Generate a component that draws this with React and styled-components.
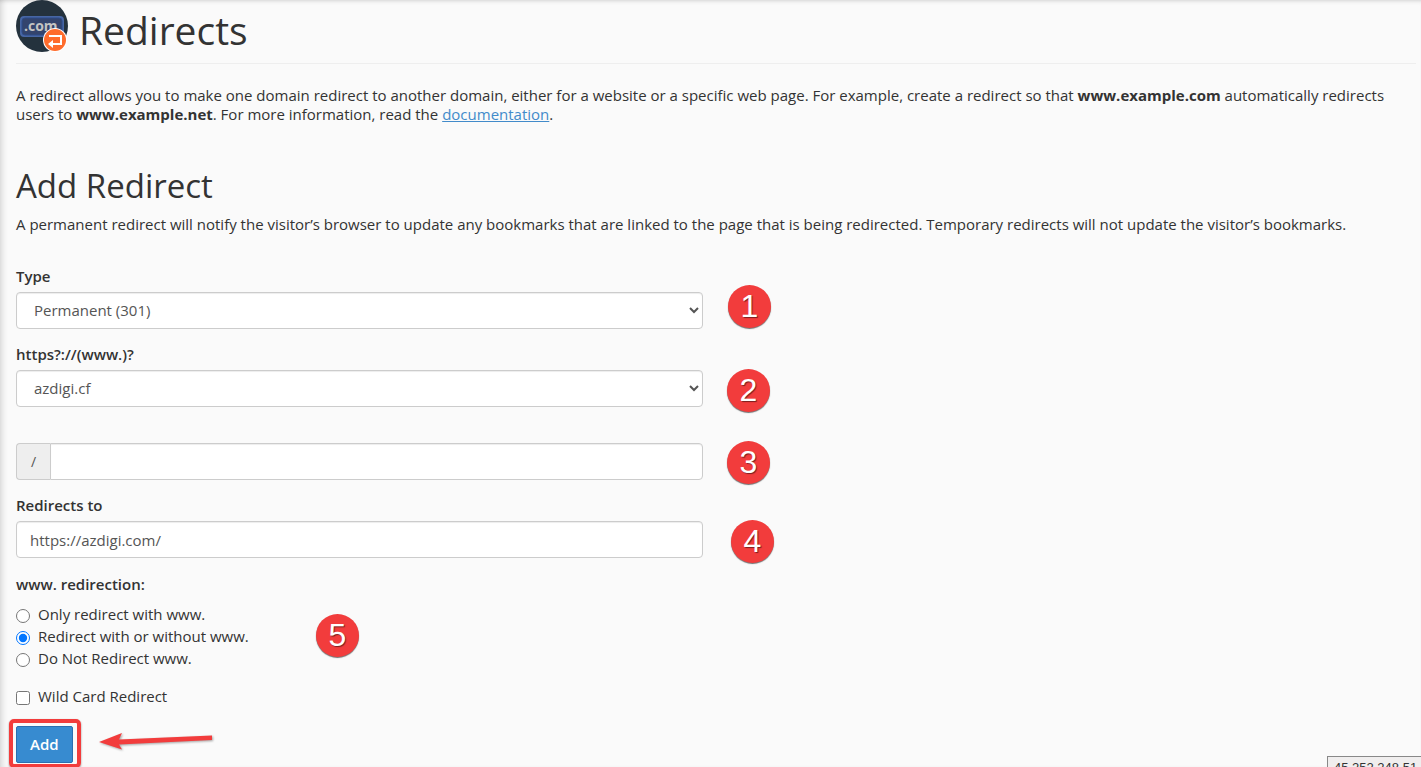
import React from "react";
import styled, { createGlobalStyle } from "styled-components";

const GlobalStyle = createGlobalStyle`
  *, *::before, *::after { box-sizing: border-box; }
  body {
    margin: 0;
    background: #fafafa;
    color: #333;
    font-family: "Open Sans", sans-serif;
    font-size: 15px;
    line-height: 19px;
    overflow: hidden;
  }
`;

const Page = styled.main`
  min-height: 100vh;
  padding: 0 5px 4px 16px;
  box-shadow: inset 6px 0 6px -4px rgba(0, 0, 0, 0.15), inset 0 4px 4px -3px rgba(0, 0, 0, 0.15);
`;

const PageHeader = styled.header`
  display: flex;
  align-items: flex-start;
  gap: 10px;
  height: 64px;
  border-bottom: 1px solid #eee;
`;

const Title = styled.h1`
  margin: 3px 0 0;
  font-size: 39px;
  line-height: 54px;
  font-weight: 400;
`;

const Intro = styled.p`
  margin: 22px 0 0;
`;

const SectionTitle = styled.h2`
  margin: 40px 0 0;
  font-size: 33px;
  line-height: 44px;
  font-weight: 400;
`;

const Description = styled.p`
  margin: 7px 0 0;
`;

const DocLink = styled.a`
  color: #428bca;
  text-decoration: underline;
`;

const Form = styled.form`
  width: calc(50% - 13px);
  margin-top: 33px;
`;

const Field = styled.div`
  display: flex;
  flex-direction: column;
  gap: 6px;
  margin-bottom: ${(p) => (p.$wide ? 36 : 16)}px;
`;

const Label = styled.label`
  font-weight: 600;
`;

const ControlRow = styled.div`
  position: relative;
  display: flex;
`;

const controlStyle = `
  flex: 1;
  min-width: 0;
  height: 37px;
  border: 1px solid #ccc;
  border-radius: 4px;
  background: #fff;
  color: #555;
  font: inherit;
  box-shadow: inset 0 1px 1px rgba(0, 0, 0, 0.075);
`;

const Select = styled.select`
  ${controlStyle}
  padding: 5px 5px 7px 13px;
`;

const Input = styled.input`
  ${controlStyle}
  padding: 6px 13px;
  ${(p) => p.$joined && "border-radius: 0 4px 4px 0;"}
`;

const Addon = styled.label`
  display: flex;
  align-items: center;
  justify-content: center;
  width: 34px;
  border: 1px solid #ccc;
  border-right: 0;
  border-radius: 4px 0 0 4px;
  background: #eee;
  color: #555;
  font-size: 14px;
`;

const Choices = styled.fieldset`
  position: relative;
  min-width: 0;
  margin: 0 0 16px;
  padding: 0;
  border: 0;
`;

const Legend = styled.legend`
  padding: 1px 0 0;
  margin-bottom: 9px;
  font-weight: 600;
`;

const Choice = styled.label`
  display: flex;
  align-items: center;
  gap: 8px;
  width: fit-content;
  height: 22px;

  input {
    width: 14px;
    height: 14px;
    margin: 3px 0 0;
  }
`;

const Actions = styled.div`
  position: relative;
  display: flex;
  width: fit-content;
  margin-top: 19px;
`;

const AddButton = styled.button`
  height: 37px;
  padding: 0 13px;
  border: 1px solid #2a6fb0;
  border-radius: 2px;
  background: #378bd0;
  color: #fff;
  font: inherit;
  font-weight: 600;
`;

const Highlight = styled.span`
  position: absolute;
  inset: -7px -8px -5px -7px;
  border: 4px solid #f23c3c;
  border-radius: 5px;
  box-shadow: 0 1px 2px rgba(0, 0, 0, 0.45);
  pointer-events: none;
`;

const Arrow = styled.svg`
  position: absolute;
  left: 82px;
  top: 4px;
  filter: drop-shadow(1px 1px 1px rgba(0, 0, 0, 0.35));
`;

const Badge = styled.span`
  position: absolute;
  left: ${(p) => p.$left};
  top: ${(p) => p.$top}px;
  display: flex;
  align-items: center;
  justify-content: center;
  width: 43px;
  height: 43px;
  border-radius: 50%;
  background: #f23c3c;
  box-shadow: 0 1px 1px rgba(0, 0, 0, 0.55);
  color: #fff;
  font: 400 32px/43px "Liberation Sans", sans-serif;
  text-shadow: 1px 1px 1px rgba(0, 0, 0, 0.5);
  pointer-events: none;
`;

const StatusTip = styled.div`
  position: fixed;
  right: -1px;
  bottom: -12px;
  width: 95px;
  height: 23px;
  padding: 2px 0 0 6px;
  border: 1px solid #888;
  background: #f0eeee;
  color: #333;
  font: 13px/18px "Liberation Sans", sans-serif;
  white-space: nowrap;
`;

function RedirectIcon() {
  return (
    <svg width="53" height="53" viewBox="0 0 53 53" aria-hidden="true">
      <circle cx="26" cy="26" r="26" fill="#24323d" />
      <rect x="4" y="16" width="44" height="21" rx="4" fill="#4766a4" />
      <rect x="6" y="18" width="40" height="17" rx="3" fill="#33446d" stroke="#2d4b88" />
      <text x="8" y="31" fill="#c3c3c3" fontFamily="Open Sans" fontWeight="700" fontSize="14">.com</text>
      <circle cx="39" cy="40" r="12" fill="#fff" />
      <circle cx="39" cy="40" r="11" fill="#ff6c2c" />
      <path d="M33 36H45V44H36" fill="none" stroke="#fff" strokeWidth="2" />
      <path d="M32 44L37 40V48Z" fill="#fff" />
    </svg>
  );
}

const redirections = [
  "Only redirect with www.",
  "Redirect with or without www.",
  "Do Not Redirect www.",
];

export default function App() {
  return (
    <>
      <GlobalStyle />
      <Page>
        <PageHeader>
          <RedirectIcon />
          <Title>Redirects</Title>
        </PageHeader>
        <Intro>
          A redirect allows you to make one domain redirect to another domain, either for a website or a
          specific web page. For example, create a redirect so that <b>www.example.com</b> automatically
          redirects users to <b>www.example.net</b>. For more information, read the{" "}
          <DocLink href="#documentation">documentation</DocLink>.
        </Intro>
        <SectionTitle>Add Redirect</SectionTitle>
        <Description>
          A permanent redirect will notify the visitor’s browser to update any bookmarks that are linked to
          the page that is being redirected. Temporary redirects will not update the visitor’s bookmarks.
        </Description>
        <Form onSubmit={(e) => e.preventDefault()}>
          <Field>
            <Label htmlFor="type">Type</Label>
            <ControlRow>
              <Select id="type">
                <option>Permanent (301)</option>
                <option>Temporary (302)</option>
              </Select>
              <Badge $left="calc(100% + 25px)" $top={-7}>1</Badge>
            </ControlRow>
          </Field>
          <Field $wide>
            <Label htmlFor="domain">https?://(www.)?</Label>
            <ControlRow>
              <Select id="domain">
                <option>azdigi.cf</option>
              </Select>
              <Badge $left="calc(100% + 24px)" $top={-1}>2</Badge>
            </ControlRow>
          </Field>
          <Field>
            <ControlRow>
              <Addon htmlFor="path">/</Addon>
              <Input id="path" type="text" $joined />
              <Badge $left="calc(100% + 24px)" $top={-2}>3</Badge>
            </ControlRow>
          </Field>
          <Field>
            <Label htmlFor="target">Redirects to</Label>
            <ControlRow>
              <Input id="target" type="text" defaultValue="https://azdigi.com/" />
              <Badge $left="calc(100% + 28px)" $top={-1}>4</Badge>
            </ControlRow>
          </Field>
          <Choices>
            <Legend>www. redirection:</Legend>
            {redirections.map((text, i) => (
              <Choice key={text}>
                <input type="radio" name="www" defaultChecked={i === 1} />
                {text}
              </Choice>
            ))}
            <Badge $left="300px" $top={11}>5</Badge>
          </Choices>
          <Choice>
            <input type="checkbox" />
            Wild Card Redirect
          </Choice>
          <Actions>
            <AddButton type="submit">Add</AddButton>
            <Highlight />
            <Arrow width="116" height="24" viewBox="0 0 116 24" aria-hidden="true">
              <path d="M1 12L24 3L21 9.500L114 5.500V10L21 14.500L24 19.500Z" fill="#f23c3c" />
            </Arrow>
          </Actions>
        </Form>
        <StatusTip>45.252.248.51</StatusTip>
      </Page>
    </>
  );
}
